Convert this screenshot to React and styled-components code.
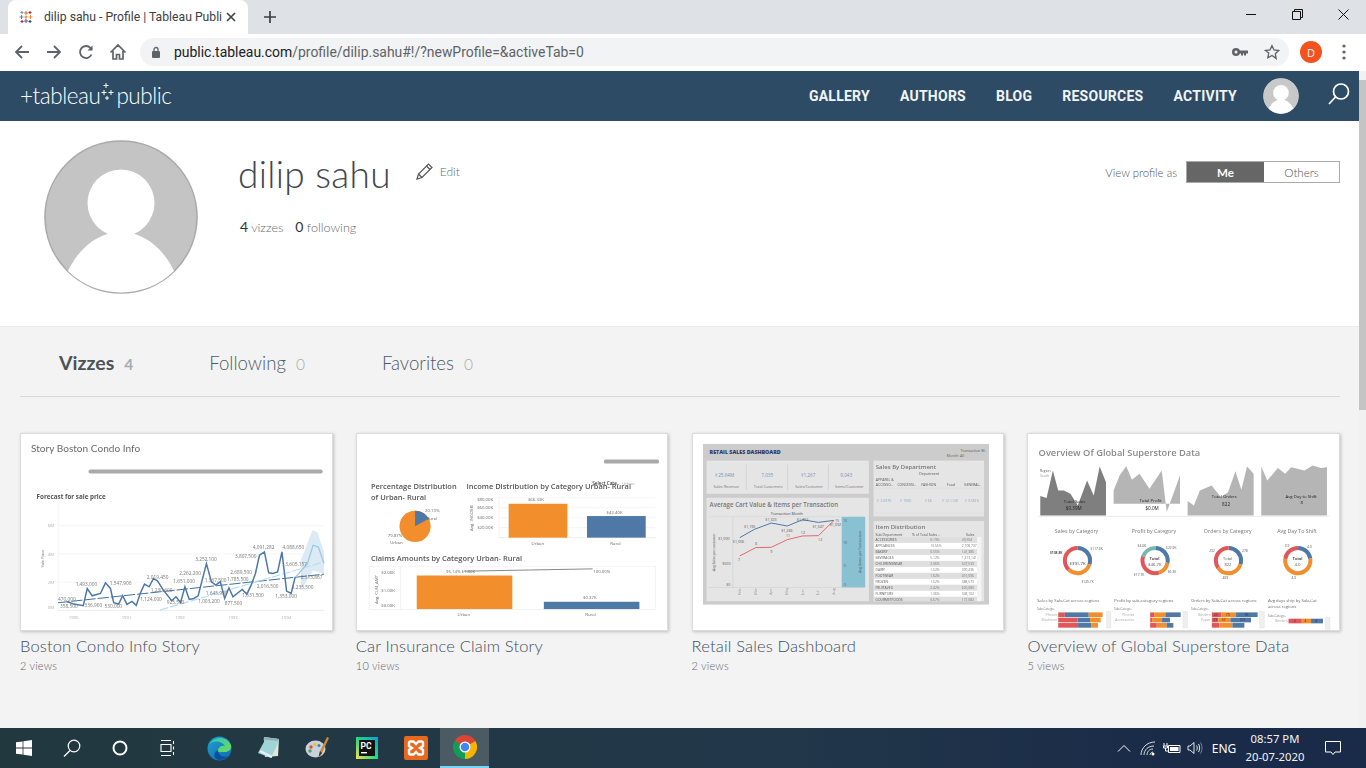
import React from "react";
import styled, { createGlobalStyle } from "styled-components";

const Global = createGlobalStyle`
  html, body { margin: 0; padding: 0; height: 768px; overflow: hidden; background: #f3f3f3; }
  body { font-family: Lato, "Open Sans", sans-serif; }
  * { box-sizing: border-box; }
`;

const Screen = styled.div`display:flex;flex-direction:column;width:1366px;height:768px;overflow:hidden;`;

/* browser chrome */
const TabStrip = styled.div`display:flex;align-items:flex-end;height:34px;background:#dee1e6;padding-left:8px;flex:none;`;
const Tab = styled.div`display:flex;align-items:center;width:240px;height:34px;background:#fff;border-radius:8px 8px 0 0;padding:0 9px 0 11px;`;
const TabTitle = styled.span`font:12.2px Roboto,sans-serif;color:#3c4043;margin-left:11px;width:175px;white-space:nowrap;`;
const NewTab = styled.div`display:flex;align-items:center;justify-content:center;width:28px;height:34px;margin-left:8px;`;
const WindowControls = styled.div`display:flex;margin-left:auto;height:34px;align-items:center;padding-right:0;`;
const WinButton = styled.div`display:flex;align-items:center;justify-content:center;width:46px;height:30px;margin-bottom:6px;`;
const Toolbar = styled.div`display:flex;align-items:center;height:37px;background:#fff;padding:0 0 1px 6px;flex:none;`;
const NavIcon = styled.div`display:flex;align-items:center;justify-content:center;width:32px;height:32px;`;
const Omnibox = styled.div`display:flex;align-items:center;width:1149px;height:28px;margin-left:6px;background:#f1f3f4;border-radius:14px;padding-left:11px;`;
const Url = styled.div`font:13.95px Roboto,sans-serif;color:#5f6368;margin-left:13px;white-space:nowrap;b{font-weight:400;color:#202124;}`;
const OmniIcons = styled.div`display:flex;align-items:center;margin-left:auto;gap:16px;padding-right:9px;`;
const ProfileDot = styled.div`width:22px;height:22px;border-radius:50%;background:#f4511e;color:#fff;font:11px "Open Sans",sans-serif;display:flex;align-items:center;justify-content:center;margin-left:11px;`;
const MenuDots = styled.div`display:flex;align-items:center;justify-content:center;width:22px;margin-left:11px;`;

/* page */
const PageRow = styled.div`display:flex;flex:1;min-height:0;`;
const Content = styled.div`flex:1;min-width:0;background:#f3f3f3;display:flex;flex-direction:column;`;
const ScrollTrack = styled.div`width:7px;background:#f1f1f1;padding-top:9px;flex:none;`;
const ScrollThumb = styled.div`height:330px;background:#c4c4c4;`;

const TopNav = styled.nav`display:flex;align-items:center;height:50px;background:#2d4b64;padding:0 8px 0 20px;flex:none;`;
const Logo = styled.div`display:flex;align-items:center;color:#fff;font:300 22.5px Lato,sans-serif;letter-spacing:-.45px;margin-top:-1px;`;
const NavLinks = styled.div`display:flex;align-items:center;gap:30px;margin-left:auto;margin-top:-1px;`;
const NavLink = styled.a`font:700 14px Roboto,sans-serif;color:#f1f4f6;letter-spacing:.25px;`;
const NavAvatar = styled.div`width:36px;height:36px;margin-left:26px;border-radius:50%;overflow:hidden;`;
const NavSearch = styled.div`margin-left:28px;width:24px;height:24px;margin-top:-5px;`;

const Profile = styled.section`display:flex;align-items:flex-start;height:206px;background:#fff;border-bottom:1px solid #eaeaea;padding:19px 19px 0 44px;flex:none;`;
const BigAvatar = styled.div`width:154px;height:154px;flex:none;`;
const Info = styled.div`margin-left:41px;display:flex;flex-direction:column;`;
const NameRow = styled.div`display:flex;align-items:center;height:70px;margin-top:-2px;margin-left:-1px;`;
const Name = styled.h1`margin:0;font:300 37px Lato,sans-serif;color:#40464b;letter-spacing:.3px;`;
const EditLink = styled.a`display:flex;align-items:center;margin-left:25px;font:300 12px Lato,sans-serif;color:#5b6f80;gap:7px;margin-top:-4px;`;
const Stats = styled.div`display:flex;gap:12px;margin-top:10px;font:300 12.6px Lato,sans-serif;color:#5f6a74;margin-left:1px;`;
const Stat = styled.span`b{font-weight:400;color:#333;font-size:14px;}`;
const ViewAs = styled.div`display:flex;align-items:center;margin-left:auto;margin-top:21px;`;
const ViewLabel = styled.span`font:300 11.4px Lato,sans-serif;color:#4f555a;margin-right:9px;`;
const Toggle = styled.div`display:flex;width:154px;height:22px;border:1px solid #aaa;`;
const ToggleOption = styled.div`
  display:flex;align-items:center;justify-content:center;width:${p => p.$active ? 77 : 75}px;
  font:${p => p.$active ? 700 : 300} 11.6px Lato,sans-serif;
  background:${p => p.$active ? "#666" : "#fff"};color:${p => p.$active ? "#fff" : "#4f555a"};
`;

const Body = styled.div`flex:1;padding:0 19px 0 20px;background:#f3f3f3;`;
const Tabs = styled.div`display:flex;height:70px;align-items:baseline;border-bottom:1px solid #d9d9d9;padding:24px 0 0 39px;`;
const TabItem = styled.div`display:flex;align-items:baseline;margin-right:${p => p.$gap}px;`;
const TabLabel = styled.span`font:${p => p.$active ? 700 : 300} ${p => p.$active ? 19.5 : 18.6}px Lato,sans-serif;color:${p => p.$active ? "#4c5257" : "#4c5a66"};`;
const TabCount = styled.span`font:${p => p.$active ? 700 : 300} 15.5px Lato,sans-serif;color:#a8adb0;margin-left:10px;`;

const Grid = styled.div`display:grid;grid-template-columns:repeat(4,1fr);column-gap:23.2px;margin-top:36px;`;
const Viz = styled.article`display:flex;flex-direction:column;min-width:0;`;
const Thumb = styled.div`height:198px;background:#fff;border:1px solid #dcdcdc;box-shadow:1px 1px 3px rgba(0,0,0,.22);overflow:hidden;`;
const ThumbSvg = styled.svg`display:block;width:100%;height:100%;filter:blur(.5px);font-family:"Open Sans",sans-serif;`;
const VizTitle = styled.div`font:300 16.5px Lato,sans-serif;color:#40505e;margin-top:5px;letter-spacing:.15px;white-space:nowrap;`;
const VizViews = styled.div`font:300 11px Lato,sans-serif;color:#5a646c;margin-top:3px;letter-spacing:.2px;`;

/* taskbar */
const Taskbar = styled.footer`display:flex;align-items:center;height:40px;flex:none;background:linear-gradient(90deg,#22383f 0%,#22384a 55%,#1a2b48 85%,#1a2b4a 100%);`;
const TaskIcon = styled.div`
  display:flex;align-items:center;justify-content:center;width:${p => p.$w || 48}px;height:40px;
  ${p => p.$active ? "background:#4a5b64;border-bottom:2px solid #76d5f5;" : ""}
`;
const TaskSpacer = styled.div`width:3px;`;
const Tray = styled.div`display:flex;align-items:center;margin-left:auto;height:40px;padding-right:9px;`;
const TraySlot = styled.div`display:flex;align-items:center;justify-content:center;width:${p => p.$w}px;height:40px;color:#fff;font:12px "Noto Sans",sans-serif;`;
const Clock = styled.div`display:flex;flex-direction:column;align-items:center;width:68px;color:#f2f4f6;font:11.3px/18px "Noto Sans",sans-serif;`;

const Fav = () => (
  <svg width="14" height="14" viewBox="0 0 14 14" strokeWidth="1.1">
    <path d="M7 1v4M5 3h4" stroke="#e8762d" fill="none"/><path d="M7 9v4M5 11h4" stroke="#5b6591" fill="none"/>
    <path d="M2.5 5v4M.5 7h4" stroke="#59879b" fill="none"/><path d="M11.5 5v4M9.5 7h4" stroke="#eb912b" fill="none"/>
    <path d="M3 1v3M1.5 2.5h3" stroke="#7099a6" fill="none"/><path d="M11 1v3M9.5 2.5h3" stroke="#c72037" fill="none"/>
    <path d="M3 10v3M1.5 11.5h3" stroke="#c72037" fill="none"/><path d="M11 10v3M9.5 11.5h3" stroke="#1f457e" fill="none"/>
    <path d="M7 5.5v3M5.5 7h3" stroke="#e8762d" fill="none"/>
  </svg>
);

const Person = ({ size, bg, border }) => (
  <svg width={size} height={size} viewBox="0 0 154 154" style={{ display: "block" }}>
    <circle cx="77" cy="77" r="76" fill={bg} stroke={border} strokeWidth="1.6"/>
    <circle cx="77" cy="63" r="33.5" fill="#fff"/>
    <path d="M24 131C36 106 56 92 77 92S118 106 130 131A76 76 0 0 1 24 131Z" fill="#fff"/>
    <rect x="65" y="88" width="24" height="12" fill="#fff"/>
  </svg>
);

const Spark = () => (
  <svg width="14" height="26" viewBox="0 0 14 26" style={{ margin: "-2px 1px 0 1px" }} stroke="#fff" strokeWidth="1" fill="none">
    <path d="M5 1v5M2.5 3.5h5M3 8v5M.5 10.5h5M10 8v5M7.5 10.5h5M6 14v4M4 16h4"/>
  </svg>
);

function Thumb1() {
  const pts = "200,515 220,522 248,527 260,475 275,497 300,490 315,458 330,475 340,518 355,522 367,497 380,523 395,514 408,526 420,490 433,462 447,470 460,445 472,452 490,480 515,512 528,500 542,517 555,470 568,508 582,505 595,497 620,400 635,455 648,465 662,455 675,505 688,473 700,500 728,478 742,492 755,465 768,430 780,375 795,365 808,428 820,430 835,425 848,365 862,483 876,490 888,440";
  const labels = [["470,000",172,512],["358,500",178,535],["1,493,000",225,467],["336,900",252,532],["530,000",312,535],["1,547,900",328,465],["2,019,450",440,445],["1,124,000",420,514],["1,230,600",452,487],["925,500",500,523],["1,651,000",520,459],["2,262,200",538,434],["3,252,100",586,392],["1,003,200",595,520],["1,645,900",618,496],["1,567,500",615,456],["1,785,500",682,454],["877,500",675,524],["2,689,500",692,432],["3,807,500",706,384],["1,631,500",728,501],["4,091,282",760,357],["2,016,500",772,475],["4,088,650",850,357],["1,353,000",828,505],["3,605,157",858,408],["1,235,500",878,478],["2,313,867",905,448]];
  return (
    <ThumbSvg viewBox="60 10 938 590" preserveAspectRatio="none">
      <text x="90" y="64" fontSize="30.5" fill="#6a6a6a" fontFamily="Lato">Story Boston Condo Info</text>
      <rect x="264" y="117" width="707" height="12" rx="5" fill="#aaa"/>
      <text x="107" y="207" fontSize="19" fontWeight="700" fill="#555">Forecast for sale price</text>
      {[286, 371, 456].map(y => <line key={y} x1="172" x2="975" y1={y} y2={y} stroke="#f0f0f0" strokeWidth="2"/>)}
      <line x1="172" x2="975" y1="541" y2="541" stroke="#e4e4e4" strokeWidth="2"/>
      <line x1="172" x2="172" y1="220" y2="541" stroke="#eee" strokeWidth="2"/>
      {[["6M",291],["4M",376],["2M",461],["0M",536]].map(([t, y]) => <text key={t} x="141" y={y} fontSize="13" fill="#b0b0b0">{t}</text>)}
      {[["1990",204],["1991",364],["1992",525],["1993",685],["1994",847]].map(([t, x]) => <text key={t} x={x} y="566" fontSize="13" fill="#b0b0b0">{t}</text>)}
      <text transform="translate(128 412) rotate(-90)" fontSize="12" fill="#777">Sale Price</text>
      <polygon points="905,390 940,300 955,305 975,365 975,430 942,422 905,480" fill="#dceaf4"/>
      <line x1="172" y1="518" x2="975" y2="432" stroke="#3f6f9f" strokeWidth="3" strokeDasharray="34 6"/>
      <line x1="480" y1="540" x2="975" y2="395" stroke="#bcdcf0" strokeWidth="3.5" strokeDasharray="26 6"/>
      <polyline points={pts} fill="none" stroke="#4c78a8" strokeWidth="4.5"/>
      <polyline points="890,440 925,400 942,345 958,350 975,400" fill="none" stroke="#9ecae6" strokeWidth="4"/>
      {labels.map(([t, x, y]) => <text key={t + x} x={x} y={y} fontSize="14.5" fill="#777">{t}</text>)}
    </ThumbSvg>
  );
}

function Thumb2() {
  return (
    <ThumbSvg viewBox="35 10 936 590" preserveAspectRatio="none">
      <rect x="779" y="87" width="166" height="12" rx="5" fill="#aaa"/>
      <g fontSize="22.5" fill="#555" fontWeight="600">
        <text x="77" y="176">Percentage Distribution</text>
        <text x="77" y="208">of Urban- Rural</text>
        <text x="365" y="176">Income Distribution by Category Urban- Rural</text>
        <text x="77" y="391">Claims Amounts by Category Urban- Rural</text>
      </g>
      <text x="744" y="164" fontSize="14" fill="#444" fontWeight="600">Select Cate..</text>
      <text x="834" y="164" fontSize="13" fill="#aaa">Urban</text>
      <circle cx="210" cy="288" r="47" fill="#f28e2b"/>
      <path d="M210 288V241A47 47 0 0 1 251 265Z" fill="#4e79a7"/>
      <g fontSize="13" fill="#666">
        <text x="240" y="245">20.13%</text><text x="245" y="268">Rural</text>
        <text x="128" y="320">79.87%</text><text x="135" y="342">Urban</text>
        <text x="397" y="211">$80.00K</text><text x="397" y="236">$60.00K</text><text x="397" y="266">$40.00K</text><text x="397" y="296">$20.00K</text>
        <text x="550" y="212">$66.33K</text><text x="787" y="250">$42.40K</text>
        <text x="561" y="343">Urban</text><text x="798" y="343">Rural</text>
        <text x="108" y="430">$2.00K</text><text x="108" y="486">$1.00K</text><text x="108" y="530">$0.00K</text>
        <text x="303" y="428">95.14% $1.80K</text><text x="747" y="428">100.00%</text><text x="716" y="508">$0.37K</text>
        <text x="338" y="557">Urban</text><text x="723" y="557">Rural</text>
      </g>
      <text transform="translate(385 302) rotate(-90)" fontSize="13" fill="#666">Avg. INCOME</text>
      <text transform="translate(97 522) rotate(-90)" fontSize="13" fill="#666">Avg. CLM_AMT</text>
      {[202, 232, 262, 292].map(y => <line key={y} x1="463" x2="935" y1={y} y2={y} stroke="#f0f0f0" strokeWidth="2"/>)}
      <line x1="463" x2="463" y1="200" y2="322" stroke="#eee" strokeWidth="2"/>
      <line x1="463" x2="935" y1="322" y2="322" stroke="#e4e4e4" strokeWidth="2"/>
      <rect x="492" y="220" width="177" height="102" fill="#f28e2b"/>
      <rect x="728" y="257" width="177" height="65" fill="#4e79a7"/>
      <rect x="72" y="408" width="862" height="130" fill="none" stroke="#eee" strokeWidth="2"/>
      <line x1="166" x2="166" y1="408" y2="538" stroke="#eee" strokeWidth="2"/>
      <rect x="215" y="436" width="288" height="101" fill="#f28e2b"/>
      <rect x="598" y="515" width="288" height="22" fill="#4e79a7"/>
      <line x1="358" y1="423" x2="745" y2="416" stroke="#888" strokeWidth="3"/>
    </ThumbSvg>
  );
}

function Thumb3() {
  const rows = [["ACCESSORIES","0.19%","49,504"],["APPLIANCES","10.55%","2,708,737"],["BAKERY","0.55%","141,385"],["BEVERAGES","5.12%","1,313,141"],["CHILDRENSWEAR","2.06%","527,533"],["DAIRY","1.52%","390,436"],["FOOTWEAR","1.62%","415,096"],["FROZEN","1.52%","388,573"],["FRUIT&VEG","2.42%","620,083"],["FURNITURE","1.36%","348,102"],["GOURMETFOODS","0.67%","172,082"]];
  return (
    <ThumbSvg viewBox="20 10 936 590" preserveAspectRatio="none">
      <rect x="50" y="40" width="862" height="483" fill="#cdcccc"/>
      <text x="70" y="70" fontSize="16" fontWeight="800" fill="#2c3a67">RETAIL SALES DASHBOARD</text>
      <text x="826" y="63" fontSize="11" fill="#555">Transaction M..</text>
      <text x="785" y="79" fontSize="11" fill="#666">Month: All</text>
      <rect x="61" y="90" width="489" height="100" fill="#e6e5e5"/>
      {[181, 305, 428].map(x => <line key={x} x1={x} x2={x} y1="102" y2="178" stroke="#ccc" strokeWidth="2"/>)}
      {[["₹25.64M",87,"Sales Revenue",82],["7,035",226,"Total Customers",203],["₹1,267",344,"Sales/Customer",328],["9,043",464,"Items/Customer",448]].map(([a, x, b, x2]) => (
        <g key={a}><text x={x} y="139" fontSize="14" fill="#6f93bb">{a}</text><text x={x2} y="173" fontSize="11.5" fill="#777">{b}</text></g>
      ))}
      <rect x="61" y="202" width="489" height="312" fill="#e6e5e5"/>
      <text x="70" y="229" fontSize="18.5" fontWeight="600" fill="#777">Average Cart Value &amp; Items per Transaction</text>
      <text x="254" y="254" fontSize="11" fill="#444">Transaction Month</text>
      <line x1="68" x2="468" y1="259" y2="259" stroke="#d6d6d6" strokeWidth="2"/>
      <line x1="68" x2="468" y1="472" y2="472" stroke="#d2d2d2" strokeWidth="2"/>
      <line x1="140" x2="140" y1="259" y2="472" stroke="#d2d2d2" strokeWidth="2"/>
      <rect x="468" y="259" width="71" height="213" fill="#8ac1d2"/>
      <polyline points="161,322 205,297 256,278 304,287 350,268 398,276 445,270" fill="none" stroke="#4c78a8" strokeWidth="3"/>
      <polyline points="161,377 209,352 256,351 304,328 350,317 398,316 445,270" fill="none" stroke="#e2686c" strokeWidth="3"/>
      <g fontSize="11" fill="#555">
        <text x="140" y="337">$1,006</text><text x="174" y="292">$1,195</text><text x="238" y="272">$1,323</text><text x="286" y="304">$1,266</text><text x="333" y="272">$1,402</text><text x="380" y="292">$1,347</text><text x="432" y="287">$1,392</text>
        <text x="156" y="391">7</text><text x="207" y="345">8</text><text x="253" y="367">9</text><text x="300" y="321">11</text><text x="345" y="310">12</text><text x="397" y="332">12</text><text x="448" y="275">15</text>
        <text x="96" y="329">$1,000</text><text x="108" y="403">$500</text><text x="120" y="467">$0</text>
        <text x="472" y="275">15</text><text x="472" y="342">10</text><text x="474" y="409">5</text><text x="474" y="467">0</text>
      </g>
      <text transform="translate(88 423) rotate(-90)" fontSize="10.5" fill="#555">Avg Sales per customer</text>
      <text transform="translate(528 428) rotate(-90)" fontSize="10.5" fill="#3d5a66">Avg Items per Transaction</text>
      {[["Feb",165],["Mar",212],["Apr",259],["May",306],["Jun",353],["Jul",400],["Aug",447]].map(([t, x]) => <text key={t} transform={`translate(${x} 494) rotate(-90)`} fontSize="11" fill="#999">{t}</text>)}
      <rect x="564" y="90" width="333" height="168" fill="#e6e5e5"/>
      <text x="571" y="116" fontSize="18" fontWeight="600" fill="#777">Sales By Department</text>
      <text x="702" y="133" fontSize="10.5" fill="#555">Department</text>
      <g fontSize="10.5" fill="#555">
        <text x="571" y="151">APPAREL &amp;</text><text x="571" y="167">ACCESSO..</text><text x="636" y="167">CONCESSI..</text><text x="708" y="167">FASHION</text><text x="785" y="167">Food</text><text x="837" y="167">GENERAL..</text>
      </g>
      <line x1="564" x2="897" y1="173" y2="173" stroke="#ddd" strokeWidth="2"/>
      <line x1="564" x2="897" y1="248" y2="248" stroke="#ddd" strokeWidth="2"/>
      <g fontSize="10.5" fill="#8aa6c6">
        <text x="576" y="214">₹ 2.037K</text><text x="645" y="214">₹ 100K</text><text x="719" y="214">₹ 6K</text><text x="771" y="214">₹ 12.112K</text><text x="840" y="214">₹ 3.561K</text>
      </g>
      <rect x="564" y="272" width="333" height="242" fill="#e6e5e5"/>
      <text x="571" y="297" fontSize="18" fontWeight="600" fill="#777">Item Distribution</text>
      <g fontSize="10.5" fill="#555">
        <text x="570" y="316">Sub Department</text><text x="680" y="316">% of Total Sales ..</text><text x="843" y="316">Sales</text>
      </g>
      {rows.map(([a, b, c], i) => (
        <g key={a}>
          <rect x="566" y={320 + i * 18} width="310" height="18" fill={i % 2 ? "#fff" : "#e0dfdf"}/>
          <text x="570" y={332 + i * 18} fontSize="10" fill="#555">{a}</text>
          <text x="735" y={332 + i * 18} fontSize="10" fill="#777">{b}</text>
          <text x="830" y={332 + i * 18} fontSize="10" fill="#777">{c}</text>
        </g>
      ))}
      <rect x="876" y="320" width="13" height="194" fill="#f4f4f4"/>
      <rect x="50" y="514" width="862" height="9" fill="#cdcccc"/>
    </ThumbSvg>
  );
}

const Donut = ({ cx, cy, r, w, segs }) => {
  let off = 25;
  return (
    <g fill="none" strokeWidth={w}>
      {segs.map(([v, c]) => {
        const el = <circle key={c + v} cx={cx} cy={cy} r={r} stroke={c} pathLength="100" strokeDasharray={`${v} ${100 - v}`} strokeDashoffset={off}/>;
        off -= v;
        return el;
      })}
    </g>
  );
};
const BLUE = "#4e79a7", OR = "#f28e2b", RED = "#e15759", TEAL = "#76b7b2";

const StackBar = ({ y, x, segs }) => {
  let cx = x;
  return segs.map(([w, c], i) => {
    const el = <rect key={i} x={cx} y={y} width={w} height="14" fill={c}/>;
    cx += w;
    return el;
  });
};

function Thumb4() {
  return (
    <ThumbSvg viewBox="22 10 936 590" preserveAspectRatio="none">
      <text x="54" y="76" fontSize="28" fontWeight="600" fill="#8a8a8a">Overview Of Global Superstore Data</text>
      <polygon points="59,255 59,197 78,203 97,120 113,180 130,180 150,190 172,225 200,150 220,195 238,108 257,155 257,255" fill="#7f7f7f"/>
      <polygon points="280,220 280,180 298,135 318,107 335,148 358,130 388,175 425,120 440,245 480,135 480,220" fill="#b5b5b5"/>
      <polygon points="503,255 503,212 522,225 540,180 575,165 603,200 625,185 647,122 665,178 682,108 702,130 702,255" fill="#b5b5b5"/>
      <polygon points="725,255 725,108 743,150 775,112 797,130 815,110 855,120 880,105 905,112 923,110 923,255" fill="#b5b5b5"/>
      <line x1="54" x2="930" y1="258" y2="258" stroke="#e0e0e0" strokeWidth="2"/>
      <g fontSize="13" fill="#222">
        <text x="130" y="217">Total Sales</text><text x="136" y="238" fontSize="14">$0.39M</text>
        <text x="358" y="215">Total Profit</text><text x="376" y="238" fontSize="14">$0.0M</text>
        <text x="576" y="203">Total Orders</text><text x="607" y="226" fontSize="14">822</text>
        <text x="798" y="203">Avg Day to Shift</text><text x="843" y="221">8</text>
      </g>
      <text x="58" y="124" fontSize="10" fill="#555">Region</text><text x="58" y="138" fontSize="10" fill="#999">South</text>
      <g fontSize="16" fill="#777">
        <text x="103" y="307">Sales by Category</text><text x="335" y="307">Profit by Category</text><text x="552" y="307">Orders by Category</text><text x="773" y="307">Avg Day To Shift</text>
      </g>
      <Donut cx={171} cy={391} r={38} w={12} segs={[[30, BLUE], [32, OR], [38, RED]]}/>
      <Donut cx={405} cy={391} r={38} w={12} segs={[[28, BLUE], [17, OR], [35, RED], [20, TEAL]]}/>
      <Donut cx={626} cy={391} r={38} w={12} segs={[[30, BLUE], [35, OR], [35, RED]]}/>
      <Donut cx={835} cy={391} r={38} w={12} segs={[[22, BLUE], [55, OR], [23, RED]]}/>
      <g fontSize="12" fill="#555">
        <text x="147" y="404" fontSize="13" fill="#333">$391.7K</text><text x="388" y="388" fontWeight="700">Total</text><text x="384" y="406" fontSize="13">$46.7K</text>
        <text x="610" y="388">Total</text><text x="614" y="406">822</text><text x="819" y="388" fontWeight="700">Total</text><text x="825" y="406" fontSize="13">4.0</text>
        <text x="88" y="370" fontSize="10" fontWeight="700">$108.8K</text><text x="210" y="360" fontSize="10">$117.3K</text><text x="183" y="460" fontSize="10">$125.7K</text>
        <text x="352" y="350" fontSize="10">$4.6K</text><text x="438" y="356" fontSize="10">$22.9K</text><text x="443" y="428" fontSize="10">$6.3K</text><text x="341" y="436" fontSize="10">$17.7K</text>
        <text x="568" y="365" fontSize="10">232</text><text x="667" y="365" fontSize="10">278</text><text x="608" y="448" fontSize="10">409</text>
        <text x="796" y="350" fontSize="10">3.9</text><text x="863" y="352" fontSize="10">4.0</text><text x="816" y="448" fontSize="10">4.0</text>
      </g>
      <g fontSize="12.8" fill="#666">
        <text x="50" y="516">Sales by Sub-Cat across regions</text><text x="282" y="516">Profit by sub-category regions</text>
        <text x="513" y="516">Orders by Sub-Cat across regions</text><text x="745" y="516">Avg days ship by Sub-Cat</text><text x="745" y="535">across regions</text>
      </g>
      <g fontSize="9.5" fill="#777">
        <text x="49" y="541">Sub-Catego..</text><text x="281" y="541">Sub-Catego..</text><text x="513" y="541">Sub-Catego..</text><text x="745" y="560">Sub-Catego..</text>
        <text x="75" y="557" fill="#aaa" fontSize="10.5">Phones</text><text x="63" y="573" fill="#aaa" fontSize="10.5">Machines</text>
        <text x="306" y="557" fill="#aaa" fontSize="10.5">Phones</text><text x="285" y="573" fill="#aaa" fontSize="10.5">Accessories</text>
        <text x="535" y="557" fill="#aaa" fontSize="10.5">Binders</text><text x="543" y="573" fill="#aaa" fontSize="10.5">Paper</text><text x="767" y="576" fill="#aaa" fontSize="10.5">Binders</text>
      </g>
      <StackBar x={113} y={547} segs={[[20, RED], [72, BLUE], [42, OR]]}/>
      <StackBar x={113} y={563} segs={[[58, RED], [38, BLUE], [32, OR]]}/>
      <StackBar x={390} y={547} segs={[[12, RED], [34, OR], [46, BLUE]]}/>
      <StackBar x={390} y={563} segs={[[6, RED], [30, OR], [24, BLUE]]}/>
      <StackBar x={576} y={547} segs={[[28, RED], [45, OR], [65, BLUE]]}/>
      <StackBar x={576} y={563} segs={[[20, RED], [36, OR], [62, BLUE]]}/>
      <StackBar x={807} y={566} segs={[[40, RED], [28, OR], [36, BLUE]]}/>
      <StackBar x={113} y={579} segs={[[60, RED], [40, BLUE], [20, OR]]}/>
      <StackBar x={390} y={579} segs={[[20, RED], [30, OR], [20, BLUE]]}/>
      <StackBar x={576} y={579} segs={[[22, RED], [40, OR], [36, BLUE]]}/>
      <g fontSize="10" fill="#333">
        <text x="582" y="558">43</text><text x="618" y="558">70</text><text x="675" y="558">96</text>
        <text x="581" y="574">29</text><text x="606" y="574">57</text><text x="660" y="574">107</text>
        <text x="823" y="577">4</text><text x="855" y="577">4</text><text x="888" y="577">4</text>
      </g>
      {[258, 489, 720, 918].map(x => <rect key={x} x={x} y={x === 918 ? 562 : 544} width="14" height="50" fill="#efefef" stroke="#ddd"/>)}
    </ThumbSvg>
  );
}

const vizzes = [
  { title: "Boston Condo Info Story", views: "2 views", T: Thumb1 },
  { title: "Car Insurance Claim Story", views: "10 views", T: Thumb2 },
  { title: "Retail Sales Dashboard", views: "2 views", T: Thumb3 },
  { title: "Overview of Global Superstore Data", views: "5 views", T: Thumb4 },
];

export default function App() {
  return (
    <Screen>
      <Global/>
      <TabStrip>
        <Tab>
          <Fav/>
          <TabTitle>dilip sahu - Profile | Tableau Publi</TabTitle>
          <svg width="10" height="10" viewBox="0 0 10 10" style={{ marginLeft: 7 }}><path d="M1 1l8 8M9 1l-8 8" stroke="#3c4043" strokeWidth="1.6"/></svg>
        </Tab>
        <NewTab><svg width="12" height="12" viewBox="0 0 12 12"><path d="M6 0v12M0 6h12" stroke="#3c4043" strokeWidth="1.7"/></svg></NewTab>
        <WindowControls>
          <WinButton><svg width="10" height="10"><path d="M0 5.5h10" stroke="#111"/></svg></WinButton>
          <WinButton><svg width="11" height="11" fill="none" stroke="#111"><path d="M.5 2.5h8v8h-8zM2.5 2.5v-2h8v8h-2"/></svg></WinButton>
          <WinButton><svg width="11" height="11"><path d="M.5.5l10 10M10.5.5l-10 10" stroke="#111"/></svg></WinButton>
        </WindowControls>
      </TabStrip>
      <Toolbar>
        <NavIcon><svg width="16" height="16" viewBox="0 0 16 16" fill="none" stroke="#5f6368" strokeWidth="1.8"><path d="M15 8H2M8 2L2 8l6 6"/></svg></NavIcon>
        <NavIcon><svg width="16" height="16" viewBox="0 0 16 16" fill="none" stroke="#5f6368" strokeWidth="1.8"><path d="M1 8h13M8 2l6 6-6 6"/></svg></NavIcon>
        <NavIcon><svg width="16" height="16" viewBox="0 0 16 16" fill="none" stroke="#5f6368" strokeWidth="1.8"><path d="M13.5 10.5A6 6 0 1 1 12.5 4L14 5.5"/><path d="M14.5 1.5v5h-5" fill="#5f6368" stroke="none"/></svg></NavIcon>
        <NavIcon><svg width="18" height="18" viewBox="0 0 18 18" fill="none" stroke="#5f6368" strokeWidth="1.7"><path d="M1.5 9.5L9 2l7.5 7.5M4 8v8h3.5v-4.5h3V16H14V8"/></svg></NavIcon>
        <Omnibox>
          <svg width="10" height="13" viewBox="0 0 10 13"><rect x="1" y="5" width="8" height="7" rx="1" fill="#5f6368"/><path d="M3 5V3.5a2 2 0 0 1 4 0V5" fill="none" stroke="#5f6368" strokeWidth="1.3"/></svg>
          <Url><b>public.tableau.com</b>/profile/dilip.sahu#!/?newProfile=&amp;activeTab=0</Url>
          <OmniIcons>
            <svg width="16" height="10" viewBox="0 0 16 10" fill="#5f6368"><circle cx="4" cy="5" r="4"/><path d="M7 3.5h9v3h-2v2h-2v-2h-1v2H9v-2H7z"/><circle cx="4" cy="5" r="1.5" fill="#f1f3f4"/></svg>
            <svg width="16" height="16" viewBox="0 0 24 24" fill="none" stroke="#5f6368" strokeWidth="2"><path d="M12 2.5l3 6.4 7 .9-5.1 4.8 1.3 7L12 17.2l-6.2 3.4 1.3-7L2 9.8l7-.9z"/></svg>
          </OmniIcons>
        </Omnibox>
        <ProfileDot>D</ProfileDot>
        <MenuDots><svg width="4" height="16" fill="#5f6368"><circle cx="2" cy="2" r="1.6"/><circle cx="2" cy="8" r="1.6"/><circle cx="2" cy="14" r="1.6"/></svg></MenuDots>
      </Toolbar>
      <PageRow>
        <Content>
          <TopNav>
            <Logo>
              <span>+tableau</span><Spark/><span>public</span>
            </Logo>
            <NavLinks>
              <NavLink>GALLERY</NavLink><NavLink>AUTHORS</NavLink><NavLink>BLOG</NavLink><NavLink>RESOURCES</NavLink><NavLink>ACTIVITY</NavLink>
            </NavLinks>
            <NavAvatar><Person size={36} bg="#c8c8c8" border="#fff"/></NavAvatar>
            <NavSearch><svg width="24" height="24" viewBox="0 0 24 24" fill="none" stroke="#fff" strokeWidth="1.7"><circle cx="14" cy="9.5" r="7.5"/><path d="M8.5 15L2 22"/></svg></NavSearch>
          </TopNav>
          <Profile>
            <BigAvatar><Person size={154} bg="#c4c4c4" border="#aaa"/></BigAvatar>
            <Info>
              <NameRow>
                <Name>dilip sahu</Name>
                <EditLink>
                  <svg width="17" height="17" viewBox="0 0 17 17" fill="none" stroke="#555" strokeWidth="1.2"><path d="M1 16l1.5-5L12.5 1 16 4.5 6 14.5z"/><path d="M10.5 3L14 6.5M2.5 11L6 14.5"/></svg>
                  Edit
                </EditLink>
              </NameRow>
              <Stats><Stat><b>4</b> vizzes</Stat><Stat><b>0</b> following</Stat></Stats>
            </Info>
            <ViewAs>
              <ViewLabel>View profile as</ViewLabel>
              <Toggle><ToggleOption $active>Me</ToggleOption><ToggleOption>Others</ToggleOption></Toggle>
            </ViewAs>
          </Profile>
          <Body>
            <Tabs>
              <TabItem $gap={76}><TabLabel $active>Vizzes</TabLabel><TabCount $active>4</TabCount></TabItem>
              <TabItem $gap={77}><TabLabel>Following</TabLabel><TabCount>0</TabCount></TabItem>
              <TabItem $gap={0}><TabLabel>Favorites</TabLabel><TabCount>0</TabCount></TabItem>
            </Tabs>
            <Grid>
              {vizzes.map(({ title, views, T }) => (
                <Viz key={title}>
                  <Thumb><T/></Thumb>
                  <VizTitle>{title}</VizTitle>
                  <VizViews>{views}</VizViews>
                </Viz>
              ))}
            </Grid>
          </Body>
        </Content>
        <ScrollTrack><ScrollThumb/></ScrollTrack>
      </PageRow>
      <Taskbar>
        <TaskIcon><svg width="16" height="16" viewBox="0 0 16 16" fill="#fff"><path d="M0 2.3l6.6-.9v6.2H0zM7.4 1.3L16 0v7.6H7.4zM0 8.4h6.6v6.2L0 13.7zM7.4 8.4H16V16l-8.6-1.3z"/></svg></TaskIcon>
        <TaskIcon><svg width="18" height="18" viewBox="0 0 18 18" fill="none" stroke="#fff" strokeWidth="1.2"><circle cx="11" cy="7" r="5.8"/><path d="M7 11.5L1 17.5"/></svg></TaskIcon>
        <TaskIcon><svg width="16" height="16" viewBox="0 0 16 16" fill="none" stroke="#fff" strokeWidth="2"><circle cx="8" cy="8" r="6.5"/></svg></TaskIcon>
        <TaskIcon><svg width="16" height="16" viewBox="0 0 16 16" fill="none" stroke="#fff" strokeWidth="1.1"><path d="M1 .5h10M1 15.5h10M1 4.5h10v7H1zM13.5 1v3M13.5 6.5v3M13.5 12v3"/></svg></TaskIcon>
        <TaskSpacer/>
        <TaskIcon $w={49}>
          <svg width="25" height="25" viewBox="0 0 25 25">
            <defs>
              <linearGradient id="edgeA" x1="0" y1="0" x2="1" y2="1"><stop offset="0" stopColor="#1fa0c9"/><stop offset="1" stopColor="#1168b8"/></linearGradient>
              <linearGradient id="edgeB" x1="0" y1="0" x2="1" y2="1"><stop offset="0" stopColor="#2fc5c0"/><stop offset="1" stopColor="#6fdc55"/></linearGradient>
            </defs>
            <circle cx="12.5" cy="12.5" r="12" fill="url(#edgeA)"/>
            <path d="M3 8C6 1 19-1 24 9c1 4-2 7-6 7H11C10 12 14 9 18 10 15 5 7 4 3 8z" fill="url(#edgeB)"/>
            <path d="M11 14c0 5 5 8 10 6-2 3-6 4.5-9 4-5-1-7-7-1-10z" fill="#0c4f9f"/>
          </svg>
        </TaskIcon>
        <TaskIcon $w={49}>
          <svg width="23" height="24" viewBox="0 0 23 24">
            <path d="M7 1l15 2-1 17-13 1z" fill="#e4e4d8"/><path d="M7 1l15 2-.5 3L6.5 4z" fill="#8fb4b8"/>
            <path d="M8 4L1 17l13 5 8-17z" fill="#9fd4d8"/><path d="M3 15l12 6" stroke="#eef" strokeWidth="2"/>
          </svg>
        </TaskIcon>
        <TaskIcon $w={49}>
          <svg width="25" height="24" viewBox="0 0 25 24">
            <ellipse cx="10.5" cy="13" rx="10" ry="8.5" fill="#c8d2da"/>
            <circle cx="6" cy="11" r="1.7" fill="#d94b3a"/><circle cx="10" cy="8.5" r="1.7" fill="#e8c33a"/><circle cx="5" cy="15" r="1.7" fill="#52a05a"/><circle cx="14" cy="9.5" r="1.5" fill="#3f7fc4"/>
            <path d="M22 1l2 1-7 15-2 4-1-1 1-5z" fill="#c68a3c"/><path d="M15 15l-1.5 6 3.5-4z" fill="#333"/>
          </svg>
        </TaskIcon>
        <TaskIcon $w={49}>
          <svg width="22" height="22" viewBox="0 0 22 22">
            <defs><linearGradient id="pc" x1="0" y1="1" x2="1" y2="0"><stop offset="0" stopColor="#f9e43a"/><stop offset=".5" stopColor="#21d789"/><stop offset="1" stopColor="#08a0d8"/></linearGradient></defs>
            <rect width="22" height="22" fill="url(#pc)"/><rect x="3" y="3" width="16" height="16" fill="#111"/>
            <text x="4.5" y="11.5" fontSize="8.5" fontWeight="700" fill="#fff" fontFamily="Roboto">PC</text>
            <rect x="5" y="15" width="6" height="1.4" fill="#fff"/>
          </svg>
        </TaskIcon>
        <TaskIcon $w={49}>
          <svg width="24" height="24" viewBox="0 0 24 24">
            <rect width="24" height="24" rx="2" fill="#e8681f"/>
            <path d="M6 5.5h3.5L12 8l2.5-2.5H18l1 1V10l-3 2 3 2v3.5l-1 1h-3.5L12 16l-2.5 2.5H6l-1-1V14l3-2-3-2V6.5z" fill="none" stroke="#fff" strokeWidth="2.4"/>
          </svg>
        </TaskIcon>
        <TaskIcon $w={49} $active>
          <svg width="24" height="24" viewBox="0 0 48 48">
            <path d="M24 24L44.8 12A24 24 0 0 0 3.2 12z" fill="#db4437"/>
            <path d="M24 24L3.2 12A24 24 0 0 0 24 48z" fill="#0f9d58"/>
            <path d="M24 24L24 48A24 24 0 0 0 44.8 12z" fill="#f4b400"/>
            <circle cx="24" cy="24" r="11" fill="#fff"/><circle cx="24" cy="24" r="8.5" fill="#4285f4"/>
          </svg>
        </TaskIcon>
        <Tray>
          <TraySlot $w={25}><svg width="14" height="8" fill="none" stroke="#fff"><path d="M1 7.5l6-6 6 6"/></svg></TraySlot>
          <TraySlot $w={24}><svg width="16" height="15" viewBox="0 0 16 15" fill="none" stroke="#d8dde2"><path d="M1 14C1 7 7 1 15 1M4 14c0-5 4-9 10-9M7 14c0-3 2-6 6-6M10 14c0-1 1-3 3-3"/><circle cx="13" cy="13" r="1.5" fill="#fff" stroke="none"/></svg></TraySlot>
          <TraySlot $w={23}><svg width="18" height="13" viewBox="0 0 18 13" fill="none" stroke="#fff"><path d="M5.5 3.5H17v7H5.5zM1 1v3M4 1v3M.5 4h4v2h-4zM2.5 6v3h3"/><rect x="7" y="5" width="8.5" height="4" fill="#fff" stroke="none"/></svg></TraySlot>
          <TraySlot $w={24}><svg width="16" height="14" viewBox="0 0 16 14" fill="none" stroke="#dfe3e8"><path d="M1 5v4h2l4 3.5v-11L3 5z"/><path d="M9.5 4.5c1 1.5 1 3.5 0 5M11.5 3c1.5 2.5 1.5 5.500 0 8"/><path d="M13.5 1.5c2 3.5 2 7.5 0 11" stroke="#7d8794"/></svg></TraySlot>
          <TraySlot $w={34}>ENG</TraySlot>
          <Clock><span>08:57 PM</span><span>20-07-2020</span></Clock>
          <TraySlot $w={48}><svg width="16" height="15" viewBox="0 0 16 15" fill="none" stroke="#fff"><path d="M.5.5h15v10.5H10L8 13.5 6 11H.5z"/></svg></TraySlot>
        </Tray>
      </Taskbar>
    </Screen>
  );
}
